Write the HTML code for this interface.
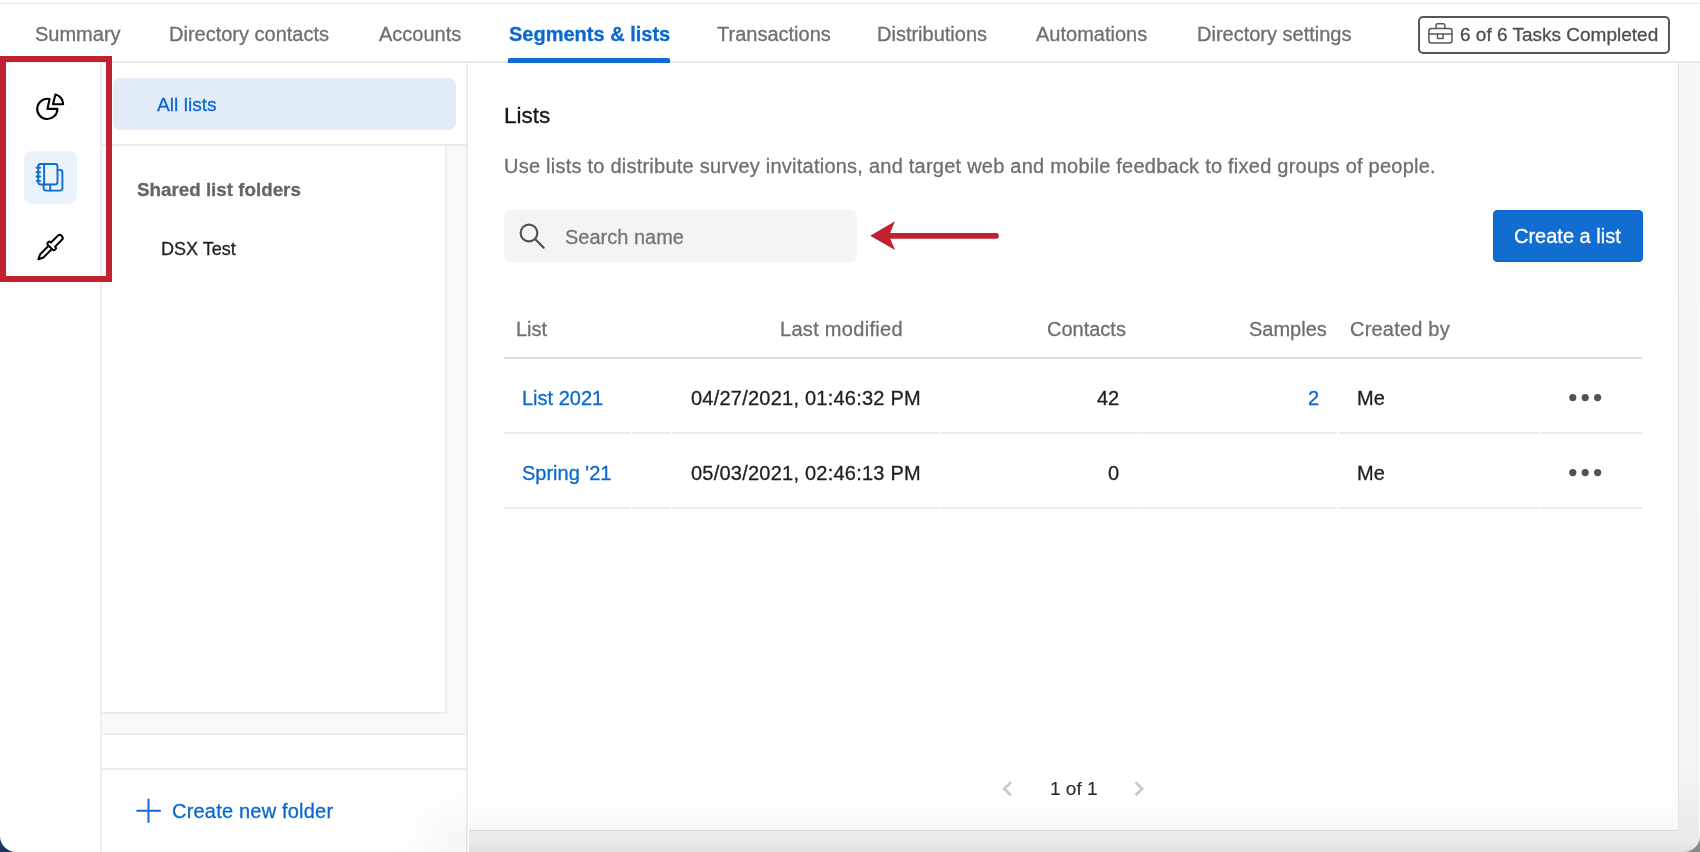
<!DOCTYPE html>
<html><head><meta charset="utf-8">
<style>
*{margin:0;padding:0;box-sizing:border-box}
html,body{width:1700px;height:852px;overflow:hidden;background:#fff}
body{position:relative;font-family:"Liberation Sans",sans-serif;font-size:20px;color:#1f1f1f}
.a{position:absolute}
.t{position:absolute;white-space:nowrap;line-height:20px;will-change:transform;-webkit-text-stroke:0.3px currentColor}
.g{color:#6f6f6f}
.bl{color:#0a68cf}
</style></head><body>
<!-- top line -->
<div class="a" style="left:0;top:3px;width:1700px;height:1px;background:#ebebeb"></div>
<!-- tab bar bottom border -->
<div class="a" style="left:0;top:61px;width:1700px;height:2px;background:#e8e8e8"></div>

<!-- tabs -->
<div class="t g" style="left:35px;top:24px">Summary</div>
<div class="t g" style="left:169px;top:24px">Directory contacts</div>
<div class="t g" style="left:379px;top:24px">Accounts</div>
<div class="t bl" style="left:509px;top:24px;font-weight:bold">Segments &amp; lists</div>
<div class="a" style="left:508px;top:58px;width:162px;height:5px;background:#0f6cd0;border-radius:1.5px 1.5px 0 0"></div>
<div class="t g" style="left:717px;top:24px">Transactions</div>
<div class="t g" style="left:877px;top:24px">Distributions</div>
<div class="t g" style="left:1036px;top:24px">Automations</div>
<div class="t g" style="left:1197px;top:24px">Directory settings</div>

<!-- tasks badge -->
<div class="a" style="left:1418px;top:16px;width:252px;height:38px;border:2px solid #52575c;border-radius:5px"></div>
<div class="t" style="left:1460px;top:25px;color:#4a4e53;font-size:19px">6 of 6 Tasks Completed</div>

<!-- left rail -->
<div class="a" style="left:100px;top:63px;width:2px;height:789px;background:#eeeeee"></div>
<div class="a" style="left:24px;top:151px;width:53px;height:53px;background:#eaf2fc;border-radius:8px"></div>

<!-- sidebar -->
<div class="a" style="left:102px;top:146px;width:365px;height:589px;background:#f9f9f9;border-bottom:2px solid #ececec"></div>
<div class="a" style="left:102px;top:146px;width:345px;height:568px;background:#fff;border-right:2px solid #ececec;border-bottom:2px solid #ececec"></div>
<div class="a" style="left:466px;top:63px;width:2px;height:789px;background:#ececec"></div>
<div class="a" style="left:113px;top:78px;width:343px;height:52px;background:#e1ecf8;border-radius:7px"></div>
<div class="t bl" style="left:157px;top:95px;font-size:19.2px">All lists</div>
<div class="a" style="left:102px;top:144px;width:365px;height:2px;background:#ececec"></div>
<div class="a" style="left:102px;top:768px;width:365px;height:2px;background:#ececec"></div>
<div class="t" style="left:137px;top:180px;font-weight:bold;font-size:18.8px;color:#63676b">Shared list folders</div>
<div class="t" style="left:161px;top:239px;font-size:18px">DSX Test</div>
<div class="t bl" style="left:172px;top:801px;letter-spacing:0.2px">Create new folder</div>

<!-- main -->
<div class="a" style="left:469px;top:63px;width:1231px;height:789px;background:linear-gradient(#f7f7f7 0,#f4f4f4 700px,#eaeaea 780px,#dedede 789px);border-right:1px solid #fafafa"></div>
<div class="a" style="left:469px;top:63px;width:1210px;height:768px;background:#fff;border-right:1px solid #e2e2e2;border-bottom:1px solid #dcdcdc"></div>

<div class="a" style="left:469px;top:795px;width:1209px;height:35px;background:linear-gradient(rgba(0,0,0,0),rgba(0,0,0,0.03))"></div>
<div class="t" style="left:504px;top:106px;font-size:22.5px;color:#161616">Lists</div>
<div class="t g" style="left:504px;top:156px;letter-spacing:0.235px">Use lists to distribute survey invitations, and target web and mobile feedback to fixed groups of people.</div>
<div class="a" style="left:504px;top:210px;width:353px;height:52px;background:#f4f4f4;border-radius:6px"></div>
<div class="t" style="left:565px;top:227px;color:#757575">Search name</div>
<div class="a" style="left:1493px;top:210px;width:150px;height:52px;background:#116dd0;border:1px solid #0864d0;border-radius:4px"></div>
<div class="t" style="left:1514px;top:226px;color:#fff">Create a list</div>

<!-- table -->
<div class="t g" style="left:516px;top:319px">List</div>
<div class="t g" style="left:780px;top:319px;letter-spacing:0.3px">Last modified</div>
<div class="t g" style="left:1047px;top:319px">Contacts</div>
<div class="t g" style="left:1249px;top:319px">Samples</div>
<div class="t g" style="left:1350px;top:319px;letter-spacing:0.2px">Created by</div>
<div class="a" style="left:504px;top:357px;width:1138px;height:2px;background:#dcdcdc"></div>

<div class="t bl" style="left:522px;top:388px">List 2021</div>
<div class="t" style="left:691px;top:388px;letter-spacing:0.23px">04/27/2021, 01:46:32 PM</div>
<div class="t" style="left:1097px;top:388px">42</div>
<div class="t bl" style="left:1308px;top:388px">2</div>
<div class="t" style="left:1357px;top:388px">Me</div>
<div class="a" style="left:504px;top:432px;width:1138px;height:2px;background:linear-gradient(90deg,#ebebeb 127px,#fff 127px,#fff 128.5px,#ebebeb 128.5px,#ebebeb 167px,#fff 167px,#fff 168.5px,#ebebeb 168.5px,#ebebeb 436px,#fff 436px,#fff 437.5px,#ebebeb 437.5px,#ebebeb 634px,#fff 634px,#fff 635.5px,#ebebeb 635.5px,#ebebeb 833.5px,#fff 833.5px,#fff 835px,#ebebeb 835px,#ebebeb 1035px,#fff 1035px,#fff 1036.5px,#ebebeb 1036.5px)"></div>

<div class="t bl" style="left:522px;top:463px">Spring '21</div>
<div class="t" style="left:691px;top:463px;letter-spacing:0.23px">05/03/2021, 02:46:13 PM</div>
<div class="t" style="left:1108px;top:463px">0</div>
<div class="t" style="left:1357px;top:463px">Me</div>
<div class="a" style="left:504px;top:507px;width:1138px;height:2px;background:linear-gradient(90deg,#ebebeb 127px,#fff 127px,#fff 128.5px,#ebebeb 128.5px,#ebebeb 167px,#fff 167px,#fff 168.5px,#ebebeb 168.5px,#ebebeb 436px,#fff 436px,#fff 437.5px,#ebebeb 437.5px,#ebebeb 634px,#fff 634px,#fff 635.5px,#ebebeb 635.5px,#ebebeb 833.5px,#fff 833.5px,#fff 835px,#ebebeb 835px,#ebebeb 1035px,#fff 1035px,#fff 1036.5px,#ebebeb 1036.5px)"></div>

<div class="t" style="left:1050px;top:779px;font-size:19px;color:#2a2a2a;-webkit-text-stroke:0.1px #2a2a2a">1 of 1</div>

<!-- icons -->
<svg class="a" style="left:0;top:0" width="1700" height="852" fill="none" stroke-linecap="round" stroke-linejoin="round">
<!-- pie -->
<path d="M49.6 99.1 L47.4 108.9 L57.4 108.9 A10.1 10.1 0 1 1 49.6 99.1 Z" stroke="#000" stroke-width="2.1"/>
<path d="M53 104.2 L55.4 94.5 A10 10 0 0 1 63.2 104.2 Z" stroke="#000" stroke-width="2.1"/>
<!-- notebook -->
<g stroke="#0f6cd0" stroke-width="1.9">
<path d="M43.6 184.5 V188.1 A2.5 2.5 0 0 0 46.1 190.6 H59.9 A2.5 2.5 0 0 0 62.4 188.1 V172.4 A2.5 2.5 0 0 0 59.9 169.9 H57.5"/>
<line x1="50.2" y1="184.5" x2="50.2" y2="190.6"/>
<rect x="38.2" y="164" width="19.3" height="20.5" rx="2.5"/>
<line x1="44.1" y1="164" x2="44.1" y2="184.5"/>
<line x1="36.6" y1="167.8" x2="40.1" y2="167.8"/>
<line x1="36.6" y1="172.3" x2="40.1" y2="172.3"/>
<line x1="36.6" y1="176.5" x2="40.1" y2="176.5"/>
<line x1="36.6" y1="180.9" x2="40.1" y2="180.9"/>
</g>
<!-- eyedropper -->
<g transform="translate(49.95 247.7) rotate(45)" stroke="#000" stroke-width="2">
<path d="M-2.9 -4.4 V-13.8 A2.9 2.9 0 0 1 2.9 -13.8 V-4.4"/>
<path d="M-2.9 -4.4 H-3.6 A1.4 1.4 0 0 0 -5 -3 V-1.9 A1.4 1.4 0 0 0 -3.6 -0.5 H3.6 A1.4 1.4 0 0 0 5 -1.9 V-3 A1.4 1.4 0 0 0 3.6 -4.4 H2.9"/>
<path d="M-2.3 -0.5 V11.5 L0 16.4 L2.3 11.5 V-0.5"/>
</g>
<!-- briefcase -->
<g stroke="#55595e" stroke-width="1.5">
<rect x="1428.9" y="28.6" width="23.1" height="14.3" rx="2.5"/>
<line x1="1428.9" y1="34" x2="1452" y2="34"/>
<path d="M1436.1 28.6 V25.3 A1.5 1.5 0 0 1 1437.6 23.8 H1443.4 A1.5 1.5 0 0 1 1444.9 25.3 V28.6"/>
<path d="M1437.5 34 V38.4 H1443.1 V34"/>
</g>
<!-- search -->
<g stroke="#505459" stroke-width="2.2">
<circle cx="529" cy="233" r="8.35"/>
<line x1="535.5" y1="239.5" x2="543.6" y2="247.6"/>
</g>
<!-- plus -->
<g stroke="#0f6cd0" stroke-width="2">
<line x1="137.2" y1="810.7" x2="160" y2="810.7"/>
<line x1="148.5" y1="799.4" x2="148.5" y2="822"/>
</g>
<!-- chevrons -->
<g stroke="#c9c9c9" stroke-width="2.7" stroke-linecap="butt" stroke-linejoin="miter">
<path d="M1011 782.3 L1004.2 788.8 L1011 795.3"/>
<path d="M1135.5 782.3 L1142.3 788.8 L1135.5 795.3"/>
</g>
<!-- dots -->
<g fill="#4f5358" stroke="none">
<circle cx="1572.8" cy="397.6" r="3.6"/><circle cx="1585.2" cy="397.6" r="3.6"/><circle cx="1597.6" cy="397.6" r="3.6"/>
<circle cx="1572.8" cy="472.6" r="3.6"/><circle cx="1585.2" cy="472.6" r="3.6"/><circle cx="1597.6" cy="472.6" r="3.6"/>
</g>
</svg>
<!-- red box -->
<div class="a" style="left:0;top:56px;width:112px;height:226px;border:6px solid #c22132"></div>
<!-- red arrow -->
<svg class="a" style="left:0;top:0" width="1700" height="852">
<path d="M870.2 235.7 L895 221.3 L889 235.7 L895 250 Z" fill="#c22132"/>
<line x1="889" y1="235.8" x2="996" y2="235.8" stroke="#c22132" stroke-width="5.8" stroke-linecap="round"/>
</svg>
<div class="a" style="left:100px;top:700px;width:367px;height:152px;background:radial-gradient(circle at 100% 100%,rgba(0,0,0,0.04),rgba(0,0,0,0) 75px)"></div>
<!-- window corners -->
<svg class="a" style="left:0;top:836px" width="16" height="16"><path d="M0 0 A16 16 0 0 0 16 16 H0 Z" fill="#1b3360"/></svg>
<svg class="a" style="left:1684px;top:836px" width="16" height="16"><path d="M16 0 A16 16 0 0 1 0 16 H16 Z" fill="#8a8a8a"/></svg>
</body></html>
